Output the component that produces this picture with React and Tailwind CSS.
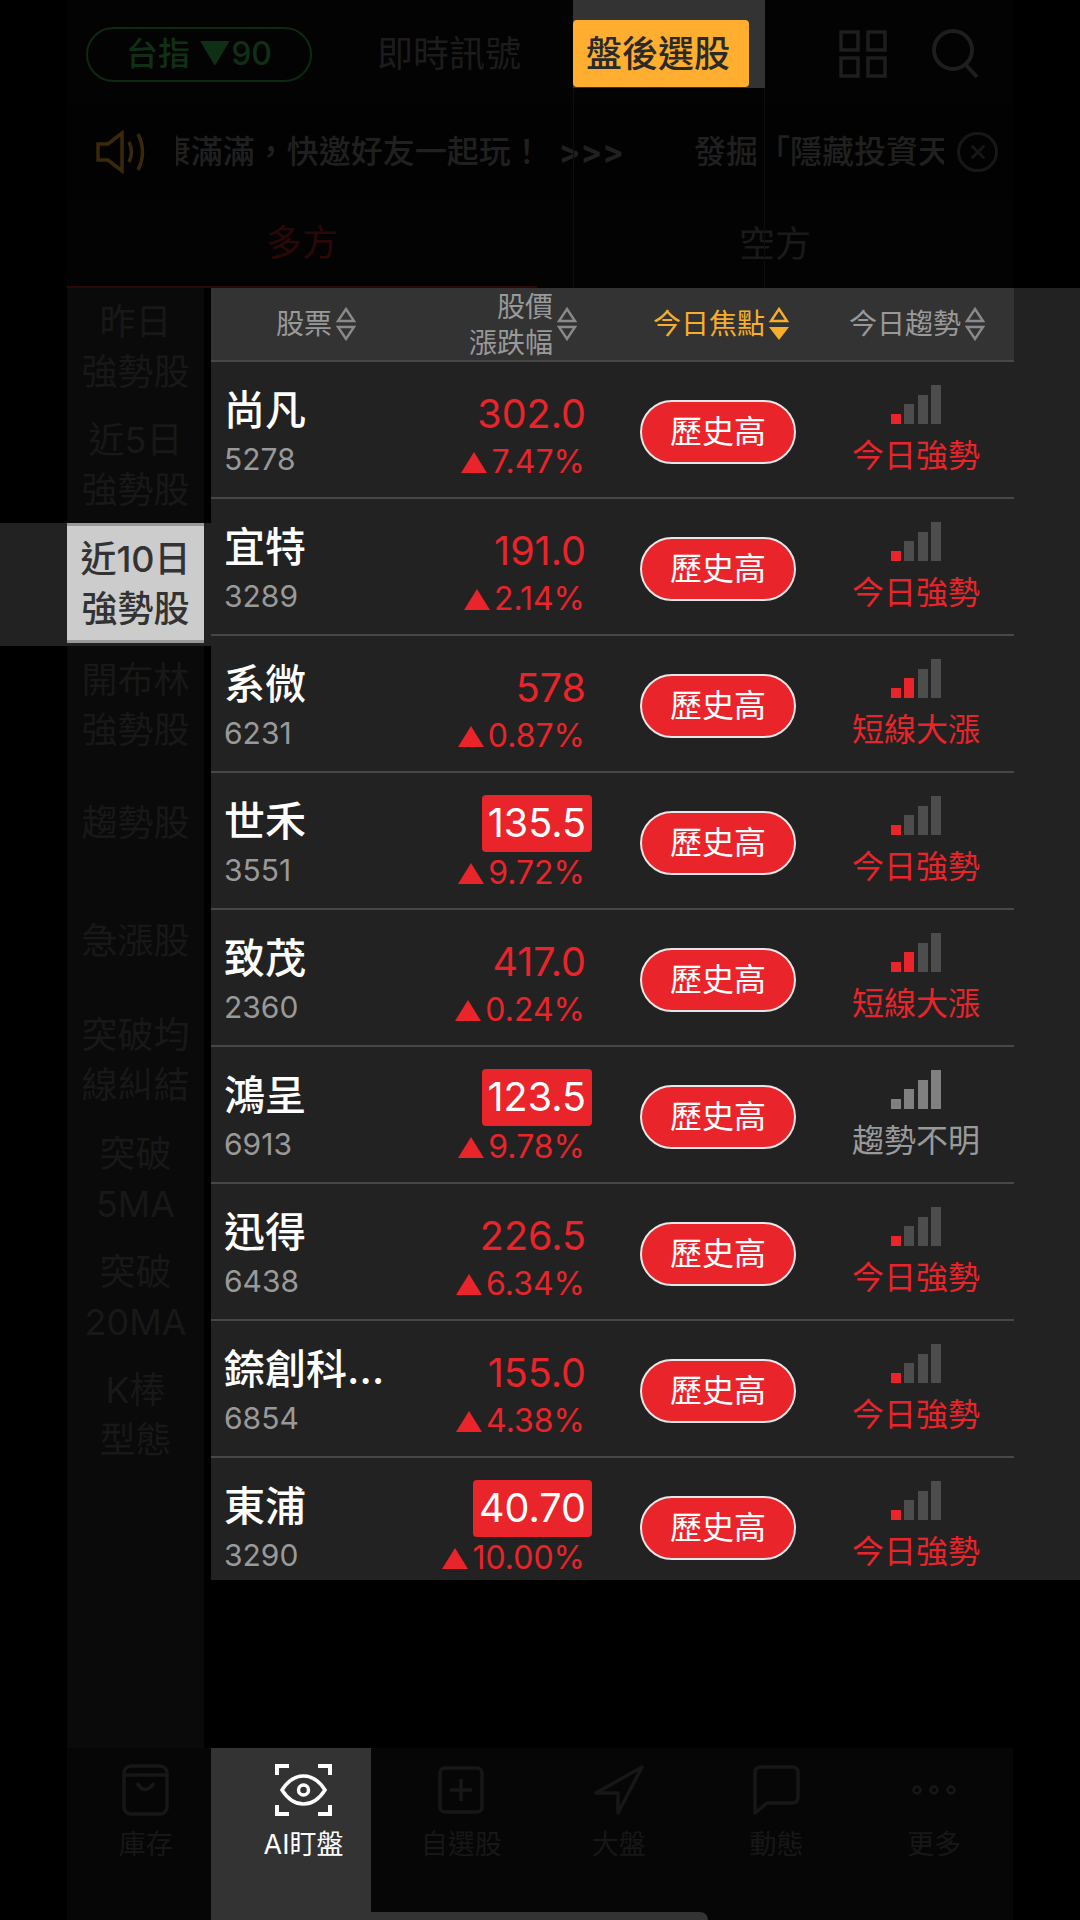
import React from "react";
import { X } from "lucide-react";

const FONT = "[font-family:Inter,'Noto_Sans_CJK_TC',sans-serif]";

const stocks = [
	{ name: "尚凡", code: "5278", price: "302.0", pct: "7.47%", level: 1, trend: "今日強勢" },
	{ name: "宜特", code: "3289", price: "191.0", pct: "2.14%", level: 1, trend: "今日強勢" },
	{ name: "系微", code: "6231", price: "578", pct: "0.87%", level: 2, trend: "短線大漲" },
	{ name: "世禾", code: "3551", price: "135.5", pct: "9.72%", level: 1, trend: "今日強勢", limit: true },
	{ name: "致茂", code: "2360", price: "417.0", pct: "0.24%", level: 2, trend: "短線大漲" },
	{ name: "鴻呈", code: "6913", price: "123.5", pct: "9.78%", level: 0, trend: "趨勢不明", limit: true },
	{ name: "迅得", code: "6438", price: "226.5", pct: "6.34%", level: 1, trend: "今日強勢" },
	{ name: "錼創科技-KY", code: "6854", price: "155.0", pct: "4.38%", level: 1, trend: "今日強勢" },
	{ name: "東浦", code: "3290", price: "40.70", pct: "10.00%", level: 1, trend: "今日強勢", limit: true },
];

const sideItems = [
	{ lines: ["昨日", "強勢股"], h: "h-[118px]" },
	{ lines: ["近5日", "強勢股"], h: "h-[117px]" },
	{ lines: ["近10日", "強勢股"], h: "h-[123px]", active: true },
	{ lines: ["開布林", "強勢股"], h: "h-[117px]" },
	{ lines: ["趨勢股"], h: "h-[119px]" },
	{ lines: ["急漲股"], h: "h-[118px]" },
	{ lines: ["突破均", "線糾結"], h: "h-[119px]" },
	{ lines: ["突破", "5MA"], h: "h-[119px]" },
	{ lines: ["突破", "20MA"], h: "h-[118px]" },
	{ lines: ["K棒", "型態"], h: "h-[118px]" },
];

const SortIcon = ({ active }) => (
	<svg width="22" height="34" viewBox="0 0 22 34" className="shrink-0">
		<path d="M11 2 L19 14 H3 Z" fill="none" stroke={active ? "#f7ae2c" : "#8a8a8a"} strokeWidth="2.4" />
		{active ? (
			<path d="M1 20 H21 L11 33 Z" fill="#f7ae2c" />
		) : (
			<path d="M3 20 H19 L11 32 Z" fill="none" stroke="#8a8a8a" strokeWidth="2.4" />
		)}
	</svg>
);

const TrendBars = ({ level }) => {
	const heights = ["h-[10px]", "h-[20px]", "h-[29px]", "h-[39px]"];
	return (
		<div className="flex items-end gap-[3.5px] h-[39px]">
			{heights.map((h, i) => (
				<div key={h} className={`w-[10px] ${h} ${i < level ? "bg-[#e9242a]" : level === 0 ? "bg-[#808080]" : "bg-[#4d4d4d]"}`} />
			))}
		</div>
	);
};

const StockRow = ({ stock }) => (
	<div className="flex h-[137px] shrink-0 border-b-2 border-[#474747] w-[803px]">
		<div className="w-[185px] pl-[13px] pt-[23px]">
			<div className="text-[41px] leading-[50px] font-medium text-white truncate w-[165px]">{stock.name}</div>
			<div className="text-[30px] leading-[38px] mt-[5px] text-[#999999]">{stock.code}</div>
		</div>
		<div className="w-[197px] pr-[1px] pt-[22px] flex flex-col items-end text-[#e9242a]">
			<div className={`text-[39.5px] h-[57px] px-[6px] rounded-[4px] ${stock.limit ? "bg-[#e9242a] text-white leading-[57px]" : "leading-[60px]"}`}>{stock.price}</div>
			<div className="flex items-center gap-[4px] text-[32px] leading-[38px] mt-[2px] mr-[7px]">
				<svg width="26" height="21" viewBox="0 0 26 21" className="shrink-0">
					<path d="M13 0 L26 21 H0 Z" fill="#e9242a" />
				</svg>
				{stock.pct}
			</div>
		</div>
		<div className="w-[225px] flex justify-start pl-[47px] pt-[38px]">
			<div className="w-[156px] h-[64px] rounded-full bg-[#e9242a] border-2 border-[#e8e8e8] text-white text-[32px] flex items-center justify-center">歷史高</div>
		</div>
		<div className={`w-[196px] flex flex-col items-center pt-[23px] ${stock.level === 0 ? "text-[#999999]" : "text-[#e9242a]"}`}>
			<TrendBars level={stock.level} />
			<div className="text-[32px] leading-[44px] mt-[10px]">{stock.trend}</div>
		</div>
	</div>
);

const NavItem = ({ label, light, children }) => (
	<div className="relative flex flex-col items-center flex-1 pt-[16px]">
		<div className="h-[52px] flex items-center justify-center">{children}</div>
		<div className={`text-[27px] leading-[36px] mt-[11px] ${light ? "text-white" : "text-[#171717]"}`}>{label}</div>
	</div>
);

export default function App() {
	return (
		<div className={`relative w-[1080px] h-[1920px] bg-black flex flex-col overflow-hidden ${FONT}`}>
			{/* top bar */}
			<div className="h-[104px] flex shrink-0">
				<div className="w-[67px]" />
				<div className="w-[506px] flex items-center bg-[#030303] pl-[19px] pt-[4px]">
					<div className="w-[226px] h-[55px] rounded-full border-2 border-[#0c2a12] flex items-center justify-center text-[32px] font-medium text-[#0f3015]">台指 ▼90</div>
					<div className="ml-[65px] text-[36px] text-[#1c1c1c]">即時訊號</div>
				</div>
				<div className="w-[192px] bg-[#030303]">
					<div className="h-[88px] bg-[#333333] pt-[20px]">
						<div className="w-[176px] h-[67px] bg-[#ffae2f] rounded-[4px] flex items-center justify-center pr-[6px] text-[36px] font-medium text-[#2a2a2a]">盤後選股</div>
					</div>
				</div>
				<div className="w-[248px] flex items-center bg-[#030303] pl-[74px] pt-[4px] gap-[44px]">
					<svg width="48" height="48" viewBox="0 0 48 48" fill="none" stroke="#1e1e1e" strokeWidth="3.5">
						<rect x="2" y="2" width="17" height="18" /><rect x="29" y="2" width="17" height="18" /><rect x="2" y="28" width="17" height="18" /><rect x="29" y="28" width="17" height="18" />
					</svg>
					<svg width="50" height="50" viewBox="0 0 50 50" fill="none" stroke="#1e1e1e" strokeWidth="4">
						<circle cx="22" cy="21" r="19" /><path d="M35 36 L46 48" />
					</svg>
				</div>
			</div>
			{/* ticker */}
			<div className="h-[96px] flex shrink-0 items-center">
				<div className="w-[67px]" />
				<div className="w-[946px] h-full flex items-center bg-[#020202] pl-[29px]">
					<svg width="52" height="44" viewBox="0 0 52 44" fill="none" stroke="#3a2808" strokeWidth="3.5" className="shrink-0">
						<path d="M2 14 H12 L26 3 V41 L12 30 H2 Z" /><path d="M33 12 Q38 22 33 32" /><path d="M42 4 Q51 22 42 40" />
					</svg>
					<div className="w-[448px] ml-[28px] text-[32px] font-medium text-[#202020] whitespace-nowrap overflow-hidden flex justify-end shrink-0">
						康滿滿，快邀好友一起玩！<span className="ml-[16px] font-bold">&gt;&gt;&gt;</span>
					</div>
					<div className="w-[250px] ml-[70px] text-[32px] font-medium text-[#202020] whitespace-nowrap overflow-hidden shrink-0">發掘「隱藏投資天</div>
					<div className="w-[41px] h-[40px] ml-[13px] rounded-full border-[3px] border-[#171717] flex items-center justify-center shrink-0">
						<X size={22} color="#171717" strokeWidth={3} />
					</div>
				</div>
			</div>
			{/* long / short tabs */}
			<div className="h-[88px] flex shrink-0">
				<div className="w-[67px]" />
				<div className="w-[470px] h-full flex items-center justify-center border-b-2 border-[#2a0808] text-[36px] text-[#2a0808] bg-[#030303]">多方</div>
				<div className="w-[476px] h-full flex items-center justify-center text-[36px] text-[#1a1a1a] bg-[#030303]">空方</div>
			</div>
			{/* faint edges of the highlighted column under the overlay */}
			<div className="absolute left-[573px] top-[88px] w-[192px] h-[200px] border-x border-[#0e0e0e]" />
			{/* content */}
			<div className="flex flex-1 min-h-0">
				<div className="w-[211px] flex flex-col shrink-0">
					{sideItems.map((item) => (
						<div key={item.lines[0]} className={`${item.h} flex shrink-0 ${item.active ? "bg-[#222222]" : ""}`}>
							<div className="w-[67px] shrink-0" />
							{item.active ? (
								<div className="w-[137px] h-[120px] bg-[#cccccc] text-[#333333] text-[36px] font-medium leading-[50px] flex flex-col items-center justify-center border-y-[3px] border-[#999999] pt-[2px]">
									{item.lines.map((l) => <div key={l}>{l}</div>)}
								</div>
							) : (
								<div className="w-[137px] bg-[#0a0a0a] text-[#181818] text-[36px] leading-[50px] flex flex-col items-center justify-center">
									{item.lines.map((l) => <div key={l}>{l}</div>)}
								</div>
							)}
						</div>
					))}
					<div className="ml-[67px] w-[137px] flex-1 bg-[#0a0a0a]" />
				</div>
				<div className="flex-1 flex flex-col">
					<div className="bg-[#222222] h-[1292px] overflow-hidden flex flex-col">
						<div className="flex h-[74px] w-[803px] bg-[#333333] border-b-2 border-[#474747] shrink-0 items-center text-[28px] text-[#999999]">
							<div className="w-[197px] flex items-center justify-center gap-[3px] pl-[14px]">股票<SortIcon /></div>
							<div className="w-[185px] flex items-center justify-end gap-[3px] pr-[15px]">
								<div className="text-right leading-[36px] pt-[2px]"><div>股價</div><div>漲跌幅</div></div>
								<SortIcon />
							</div>
							<div className="w-[225px] flex items-center justify-center gap-[3px] pl-[32px] text-[#f7ae2c]">今日焦點<SortIcon active /></div>
							<div className="w-[196px] flex items-center justify-center gap-[3px] pl-[3px]">今日趨勢<SortIcon /></div>
						</div>
						{stocks.map((stock) => (
							<StockRow key={stock.code} stock={stock} />
						))}
					</div>
				</div>
			</div>
			{/* bottom nav */}
			<div className="relative h-[172px] flex shrink-0">
				<div className="absolute left-[211px] top-0 bottom-0 w-[160px] bg-[#333333]" />
				<div className="absolute left-[371px] bottom-0 w-[337px] h-[8px] bg-[#333333] rounded-tr-[8px]" />
				<div className="w-[67px]" />
				<div className="w-[946px] flex bg-[#060606]">
					<NavItem label="庫存">
						<svg width="47" height="52" viewBox="0 0 47 52" fill="none" stroke="#171717" strokeWidth="3.5">
							<rect x="2" y="2" width="43" height="48" rx="7" /><path d="M2 11 H45" /><path d="M15 19 Q23 32 32 19" />
						</svg>
					</NavItem>
					<NavItem label="AI盯盤" light>
						<svg width="57" height="52" viewBox="0 0 57 52" fill="none" stroke="#ffffff">
							<path d="M2 11 V2 H14 M43 2 H55 V11 M2 41 V50 H14 M43 50 H55 V41" strokeWidth="4" />
							<path d="M7 26 C14 15 21 12 28.5 12 S43 15 50 26 C43 37 36 40 28.5 40 S14 37 7 26 Z" strokeWidth="3.5" />
							<circle cx="28.5" cy="26" r="5" strokeWidth="3.5" />
						</svg>
					</NavItem>
					<NavItem label="自選股">
						<svg width="46" height="48" viewBox="0 0 46 48" fill="none" stroke="#171717" strokeWidth="3.5">
							<rect x="2" y="2" width="42" height="44" rx="5" /><path d="M12 24 H34 M23 13 V35" />
						</svg>
					</NavItem>
					<NavItem label="大盤">
						<svg width="50" height="50" viewBox="0 0 50 50" fill="none" stroke="#171717" strokeWidth="3.5" strokeLinejoin="round">
							<path d="M48 2 L2 28 L24 28 L24 48 Z" />
						</svg>
					</NavItem>
					<NavItem label="動態">
						<svg width="47" height="50" viewBox="0 0 47 50" fill="none" stroke="#171717" strokeWidth="3.5" strokeLinejoin="round">
							<path d="M8 2 H39 Q45 2 45 8 V32 Q45 38 39 38 H14 L2 48 V8 Q2 2 8 2 Z" />
						</svg>
					</NavItem>
					<NavItem label="更多">
						<svg width="44" height="12" viewBox="0 0 44 12" fill="none" stroke="#171717" strokeWidth="2.5">
							<circle cx="5" cy="6" r="3.5" /><circle cx="22" cy="6" r="3.5" /><circle cx="39" cy="6" r="3.5" />
						</svg>
					</NavItem>
				</div>
			</div>
		</div>
	);
}
